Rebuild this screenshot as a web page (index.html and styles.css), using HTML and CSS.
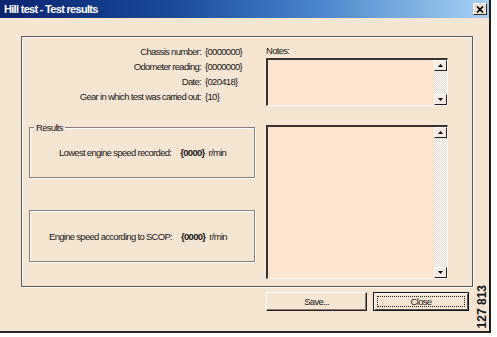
FILE: index.html
```html
<!DOCTYPE html>
<html>
<head>
<meta charset="utf-8">
<link rel="stylesheet" href="styles.css">
</head>
<body>
<div class="window">
  <div class="titlebar">
    <span class="title">Hill test - Test results</span>
    <span class="close-x"><svg width="8" height="7" viewBox="0 0 8 7"><path d="M1 0.5 L7 6.5 M7 0.5 L1 6.5" stroke="#000" stroke-width="1.7"/></svg></span>
  </div>
  <div class="content">
    <div class="panel">
      <div class="left">
        <div class="info">
          <span class="lbl">Chassis number:</span><span class="val">{0000000}</span>
          <span class="lbl">Odometer reading:</span><span class="val">{0000000}</span>
          <span class="lbl">Date:</span><span class="val">{020418}</span>
          <span class="lbl">Gear in which test was carried out:</span><span class="val">{10}</span>
        </div>
        <div class="group results">
          <span class="legend">Results</span>
          <div class="reading">Lowest engine speed recorded:<span class="num">{0000}</span>r/min</div>
        </div>
        <div class="group scop">
          <div class="reading">Engine speed according to SCOP:<span class="num">{0000}</span>r/min</div>
        </div>
      </div>
      <div class="right">
        <div class="notes-label">Notes:</div>
        <div class="textbox notes">
          <div class="scroll">
            <span class="arrow"><svg width="5" height="3" viewBox="0 0 5 3"><path d="M0 3 L2.5 0 L5 3 Z" fill="#000"/></svg></span>
            <span class="track"></span>
            <span class="arrow"><svg width="5" height="3" viewBox="0 0 5 3"><path d="M0 0 L2.5 3 L5 0 Z" fill="#000"/></svg></span>
          </div>
        </div>
        <div class="textbox big">
          <div class="scroll">
            <span class="arrow"><svg width="5" height="3" viewBox="0 0 5 3"><path d="M0 3 L2.5 0 L5 3 Z" fill="#000"/></svg></span>
            <span class="track"></span>
            <span class="arrow"><svg width="5" height="3" viewBox="0 0 5 3"><path d="M0 0 L2.5 3 L5 0 Z" fill="#000"/></svg></span>
          </div>
        </div>
      </div>
    </div>
    <div class="buttons">
      <span class="btn">Save...</span>
      <span class="btn default"><span class="focus">Close</span></span>
    </div>
  </div>
  <div class="ref">127 813</div>
</div>
</body>
</html>
```

FILE: styles.css
```css
html, body {
  margin: 0;
  padding: 0;
  background: #ffffff;
}

body {
  font-family: "Liberation Sans", Arial, sans-serif;
  font-size: 9.5px;
  letter-spacing: -0.7px;
  color: #1a1714;
}

.window {
  position: relative;
  width: 491px;
  height: 333px;
  box-sizing: border-box;
  background: #f5e6d3;
  border-right: 2px solid #1e1a18;
  border-bottom: 2px solid #2a2522;
}

.titlebar {
  height: 18px;
  display: flex;
  align-items: center;
  justify-content: space-between;
  padding: 0 2px 0 4px;
  background: linear-gradient(to right, #0a2470 0%, #1a4a98 35%, #4a86cc 65%, #a8d0f2 100%);
}

.title {
  color: #ffffff;
  font-weight: bold;
  font-size: 11px;
  letter-spacing: -0.7px;
}

.close-x {
  width: 14px;
  height: 12px;
  box-sizing: border-box;
  display: flex;
  align-items: center;
  justify-content: center;
  background: #eee2d2;
  border: 1px solid;
  border-color: #ffffff #2a2a2a #2a2a2a #ffffff;
}

.content {
  padding: 18px 0 0 21px;
}

.panel {
  width: 452px;
  height: 251px;
  box-sizing: border-box;
  display: flex;
  gap: 11px;
  padding: 7px 0 0 7px;
  border: 1px solid #62574e;
  box-shadow: 1px 1px 0 #ffffff, inset 1px 1px 0 #ffffff;
}

.left {
  width: 226px;
  display: flex;
  flex-direction: column;
}

.info {
  display: grid;
  grid-template-columns: 172px auto;
  column-gap: 4px;
  line-height: 15px;
}

.lbl {
  text-align: right;
  white-space: nowrap;
}

.group {
  position: relative;
  box-sizing: border-box;
  display: flex;
  align-items: center;
  border: 1px solid #8a7f76;
  box-shadow: 1px 1px 0 #ffffff, inset 1px 1px 0 #ffffff;
}

.results {
  margin-top: 23px;
  height: 51px;
  padding-left: 29px;
}

.scop {
  margin-top: 32px;
  height: 52px;
  padding-left: 19px;
}

.legend {
  position: absolute;
  top: -7px;
  left: 4px;
  padding: 0 2px;
  line-height: 13px;
  background: #f5e6d3;
}

.reading {
  white-space: nowrap;
}

.num {
  font-weight: bold;
  margin: 0 4px 0 9px;
}

.right {
  width: 182px;
  display: flex;
  flex-direction: column;
}

.notes-label {
  line-height: 14px;
}

.textbox {
  box-sizing: border-box;
  display: flex;
  justify-content: flex-end;
  background: #fce5cf;
  border-top: 2px solid #3a322c;
  border-left: 2px solid #3a322c;
  border-right: 1px solid #fffaf4;
  border-bottom: 1px solid #fffaf4;
}

.notes {
  height: 48px;
}

.big {
  margin-top: 19px;
  height: 154px;
}

.scroll {
  width: 13px;
  display: flex;
  flex-direction: column;
}

.arrow {
  height: 11px;
  box-sizing: border-box;
  display: flex;
  align-items: center;
  justify-content: center;
  background: #f4ece2;
  border: 1px solid;
  border-color: #ffffff #1e1e1e #1e1e1e #ffffff;
}

.track {
  flex: 1;
  background: repeating-conic-gradient(#ffffff 0 25%, #e4d8ca 0 50%) 0 0 / 2px 2px;
}

.buttons {
  display: flex;
  gap: 6px;
  margin: 5px 0 0 245px;
}

.btn {
  height: 19px;
  box-sizing: border-box;
  display: flex;
  align-items: center;
  justify-content: center;
}

.btn:first-child {
  width: 101px;
  border: 1px solid;
  border-color: #ffffff #2a2522 #2a2522 #ffffff;
  box-shadow: inset -1px -1px 0 #8a7f76;
}

.default {
  width: 96px;
  border: 1px solid #111111;
  box-shadow: inset 1px 1px 0 #ffffff, inset -1px -1px 0 #555;
  padding: 3px;
}

.focus {
  flex: 1;
  align-self: stretch;
  display: flex;
  align-items: center;
  justify-content: center;
  border: 1px dotted #222;
}

.ref {
  position: absolute;
  right: 1px;
  bottom: 3px;
  writing-mode: vertical-rl;
  transform: rotate(180deg);
  font-family: "Liberation Sans", Arial, sans-serif;
  font-weight: bold;
  font-size: 12px;
  letter-spacing: 0;
  line-height: 11px;
  color: #111;
}
```
